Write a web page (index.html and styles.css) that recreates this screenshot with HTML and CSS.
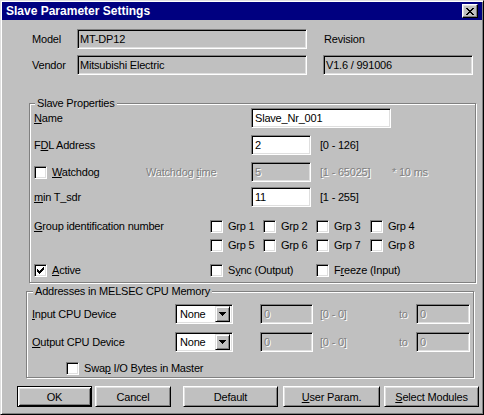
FILE: index.html
```html
<!DOCTYPE html>
<html>
<head>
<meta charset="utf-8">
<link rel="stylesheet" href="styles.css">
</head>
<body>
<div class="window">
  <div class="titlebar">
    <span class="title">Slave Parameter Settings</span>
    <span class="close"><svg width="8" height="7" viewBox="0 0 8 7" shape-rendering="crispEdges"><path d="M0 0h2v1H0z M6 0h2v1H6z M1 1h2v1H1z M5 1h2v1H5z M2 2h4v1H2z M3 3h2v1H3z M2 4h4v1H2z M1 5h2v1H1z M5 5h2v1H5z M0 6h2v1H0z M6 6h2v1H6z" fill="#000"/></svg></span>
  </div>

  <div class="info">
    <span class="lbl">Model</span>
    <span class="field w230">MT-DP12</span>
    <span class="lbl rev">Revision</span>
    <span class="lbl">Vendor</span>
    <span class="field w230">Mitsubishi Electric</span>
    <span class="field w150">V1.6 / 991006</span>
  </div>

  <div class="group props">
    <div class="gtitle">Slave Properties</div>

    <div class="row r-name">
      <span class="lbl c217"><u>N</u>ame</span>
      <span class="input w140">Slave_Nr_001</span>
    </div>

    <div class="row r-gap7">
      <span class="lbl c217">F<u>D</u>L Address</span>
      <span class="input w60">2</span>
      <span class="range">[0 - 126]</span>
    </div>

    <div class="row r-gap7">
      <span class="chk c112"><span class="cb"></span><span class="cbl"><u>W</u>atchdog</span></span>
      <span class="dis c105">Watchdog <u>t</u>ime</span>
      <span class="input w60 disabled"><span class="dis">5</span></span>
      <span class="range dis c72">[1 - 65025]</span>
      <span class="dis">* 10 ms</span>
    </div>

    <div class="row r-gap5">
      <span class="lbl c217"><u>m</u>in T_sdr</span>
      <span class="input w60">11</span>
      <span class="range">[1 - 255]</span>
    </div>

    <div class="grp-block">
      <span class="lbl c176 line13"><u>G</u>roup identification number</span>
      <div class="grp-grid">
        <span class="chk"><span class="cb"></span><span class="cbl">Grp 1</span></span>
        <span class="chk"><span class="cb"></span><span class="cbl">Grp 2</span></span>
        <span class="chk"><span class="cb"></span><span class="cbl">Grp 3</span></span>
        <span class="chk"><span class="cb"></span><span class="cbl">Grp 4</span></span>
        <span class="chk"><span class="cb"></span><span class="cbl">Grp 5</span></span>
        <span class="chk"><span class="cb"></span><span class="cbl">Grp 6</span></span>
        <span class="chk"><span class="cb"></span><span class="cbl">Grp 7</span></span>
        <span class="chk"><span class="cb"></span><span class="cbl">Grp 8</span></span>
      </div>
    </div>

    <div class="row r-active">
      <span class="chk c176"><span class="cb"><svg width="7" height="7" viewBox="0 0 7 7" shape-rendering="crispEdges"><path d="M0 2h1v3H0z M1 3h1v3H1z M2 4h1v3H2z M3 3h1v3H3z M4 2h1v3H4z M5 1h1v3H5z M6 0h1v3H6z" fill="#000"/></svg></span><span class="cbl"><u>A</u>ctive</span></span>
      <span class="chk c106"><span class="cb"></span><span class="cbl">S<u>y</u>nc (Output)</span></span>
      <span class="chk"><span class="cb"></span><span class="cbl">F<u>r</u>eeze (Input)</span></span>
    </div>
  </div>

  <div class="group addr">
    <div class="gtitle">Addresses in MELSEC CPU Memory</div>

    <div class="row r-in">
      <span class="lbl c143"><u>I</u>nput CPU Device</span>
      <span class="combo"><span class="ctext">None</span><span class="dd"><svg width="7" height="4" viewBox="0 0 7 4" shape-rendering="crispEdges"><path d="M0 0h7v1H0z M1 1h5v1H1z M2 2h3v1H2z M3 3h1v1H3z" fill="#000"/></svg></span></span>
      <span class="input w53 disabled m27"><span class="dis">0</span></span>
      <span class="dis c79 m7">[0 - 0]</span>
      <span class="dis c17">to</span>
      <span class="input w54 disabled"><span class="dis">0</span></span>
    </div>

    <div class="row r-gap8">
      <span class="lbl c143"><u>O</u>utput CPU Device</span>
      <span class="combo"><span class="ctext">None</span><span class="dd"><svg width="7" height="4" viewBox="0 0 7 4" shape-rendering="crispEdges"><path d="M0 0h7v1H0z M1 1h5v1H1z M2 2h3v1H2z M3 3h1v1H3z" fill="#000"/></svg></span></span>
      <span class="input w53 disabled m27"><span class="dis">0</span></span>
      <span class="dis c79 m7">[0 - 0]</span>
      <span class="dis c17">to</span>
      <span class="input w54 disabled"><span class="dis">0</span></span>
    </div>

    <div class="row r-swap">
      <span class="chk"><span class="cb"></span><span class="cbl">Swa<u>p</u> I/O Bytes in Master</span></span>
    </div>
  </div>

  <div class="buttons">
    <button class="btn default b-ok">OK</button>
    <button class="btn b-cancel">Cancel</button>
    <button class="btn b-default">Default</button>
    <button class="btn b-user"><u>U</u>ser Param.</button>
    <button class="btn b-select"><u>S</u>elect Modules</button>
  </div>
</div>
</body>
</html>
```

FILE: styles.css
```css
* { box-sizing: border-box; }
html, body { margin: 0; padding: 0; background: #c0c0c0; }
body {
  font-family: "Liberation Sans", Arial, sans-serif;
  font-size: 11px;
  letter-spacing: -0.2px;
  color: #000;
}
u { text-decoration: underline; text-underline-offset: 1px; }

.window {
  width: 484px;
  height: 415px;
  background: #c0c0c0;
  border: 1px solid;
  border-color: #dfdfdf #000 #000 #dfdfdf;
  box-shadow: inset 1px 1px #fff, inset -1px -1px #808080;
  padding: 1px;
}

.titlebar {
  height: 18px;
  background: #000080;
  color: #fff;
  display: flex;
  align-items: center;
  justify-content: space-between;
  padding: 0 4px 0 4px;
}
.title { font-weight: bold; font-size: 12px; letter-spacing: 0; }
.close {
  width: 16px;
  height: 14px;
  background: #c0c0c0;
  border: 1px solid;
  border-color: #fff #000 #000 #fff;
  box-shadow: inset -1px -1px #808080, inset 1px 1px #dfdfdf;
  display: flex;
  align-items: center;
  justify-content: center;
}

/* top info */
.info {
  display: grid;
  grid-template-columns: 45px 246px 150px;
  grid-template-rows: 20px 20px;
  row-gap: 6px;
  margin: 9px 0 0 30px;
  align-items: center;
}
.rev { padding-left: 1px; }

.field, .input, .combo, .cb {
  border: 1px solid;
  border-color: #808080 #fff #fff #808080;
  box-shadow: inset 1px 1px #000, inset -1px -1px #dfdfdf;
}
.field {
  height: 20px;
  display: flex;
  align-items: center;
  padding: 0 1px 0 2px;
  white-space: nowrap;
}
.w230 { width: 230px; }
.w150 { width: 150px; }

.lbl { white-space: nowrap; }
.dis { color: #808080; text-shadow: 1px 1px 0 #fff; white-space: nowrap; }

/* group boxes */
.group {
  border: 1px solid #808080;
  box-shadow: inset 1px 1px #fff, 1px 1px #fff;
}
.gtitle {
  width: max-content;
  height: 13px;
  line-height: 13px;
  margin: -7px 0 -6px 1px;
  padding: 0 2px;
  background: #c0c0c0;
}
.props {
  width: 447px;
  height: 180px;
  margin: 28px 0 0 27px;
  padding-left: 4px;
}
.addr {
  width: 448px;
  height: 87px;
  margin: 8px 0 0 24px;
  padding-left: 5px;
}

.row { display: flex; align-items: center; height: 20px; white-space: nowrap; }
.r-name { margin-top: 4px; }
.r-gap7 { margin-top: 7px; }
.r-gap5 { margin-top: 5px; }
.r-gap8 { margin-top: 8px; }
.r-in { margin-top: 12px; }
.r-active { margin-top: 12px; height: 13px; }
.r-swap { margin-top: 10px; height: 13px; padding-left: 34px; }

.c217 { width: 217px; flex: none; }
.c176 { width: 176px; flex: none; }
.c143 { width: 143px; flex: none; }
.c112 { width: 112px; flex: none; }
.c106 { width: 106px; flex: none; }
.c105 { width: 105px; flex: none; }
.c79 { width: 79px; flex: none; }
.c72 { width: 72px; flex: none; }
.c17 { width: 17px; flex: none; }
.m27 { margin-left: 27px; }
.m7 { margin-left: 7px; }
.line13 { line-height: 13px; }

.input {
  height: 20px;
  background: #fff;
  display: flex;
  align-items: center;
  padding: 0 2px 0 3px;
  flex: none;
}
.input.disabled { background: #c0c0c0; }
.w140 { width: 140px; }
.w60 { width: 60px; }
.w53 { width: 53px; }
.w54 { width: 54px; }
.range { margin-left: 9px; }

/* checkboxes */
.chk { display: flex; align-items: center; height: 13px; line-height: 13px; white-space: nowrap; }
.cb {
  width: 13px;
  height: 13px;
  background: #fff;
  flex: none;
  display: flex;
  align-items: center;
  justify-content: center;
}
.cbl { margin-left: 5px; }

.grp-block { display: flex; margin-top: 13px; }
.grp-grid {
  display: grid;
  grid-template-columns: 53px 53px 54px auto;
  grid-template-rows: 13px 13px;
  row-gap: 6px;
}

/* combo */
.combo {
  width: 58px;
  height: 20px;
  background: #fff;
  display: flex;
  align-items: center;
  justify-content: space-between;
  padding: 2px 2px 2px 4px;
  flex: none;
}
.dd {
  width: 15px;
  height: 16px;
  background: #c0c0c0;
  border: 1px solid;
  border-color: #dfdfdf #000 #000 #dfdfdf;
  box-shadow: inset 1px 1px #fff, inset -1px -1px #808080;
  display: flex;
  align-items: center;
  justify-content: center;
}

/* buttons */
.buttons { display: flex; height: 21px; margin: 8px 0 0 15px; }
.btn {
  font-family: inherit;
  font-size: 11px;
  letter-spacing: -0.2px;
  color: #000;
  height: 21px;
  padding: 0;
  background: #c0c0c0;
  border: 1px solid;
  border-color: #fff #000 #000 #fff;
  box-shadow: inset 1px 1px #dfdfdf, inset -1px -1px #808080;
  flex: none;
}
.btn.default {
  border: 1px solid #000;
  box-shadow: inset 1px 1px #fff, inset -1px -1px #000, inset 2px 2px #dfdfdf, inset -2px -2px #808080;
}
.b-ok { width: 75px; }
.b-cancel { width: 76px; margin-left: 3px; }
.b-default { width: 95px; margin-left: 12px; }
.b-user { width: 97px; margin-left: 5px; }
.b-select { width: 95px; margin-left: 4px; }
```
